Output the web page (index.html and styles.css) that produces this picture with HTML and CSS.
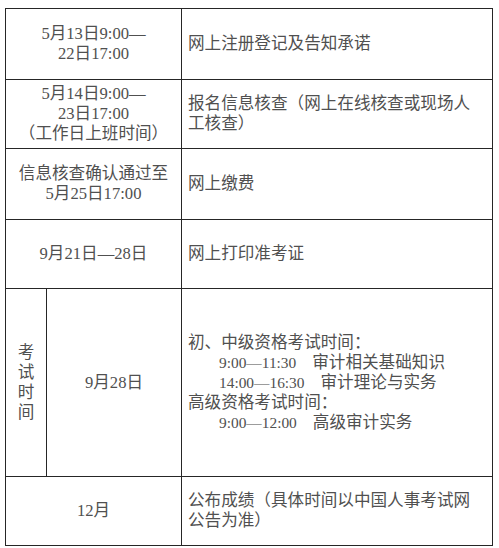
FILE: index.html
```html
<!DOCTYPE html>
<html lang="zh-CN">
<head>
<meta charset="utf-8">
<link rel="stylesheet" href="styles.css">
</head>
<body>
<div class="grid">
  <div class="cell span2 center">5月13日9:00—<br>22日17:00</div>
  <div class="cell left">网上注册登记及告知承诺</div>

  <div class="cell span2 center">5月14日9:00—<br>23日17:00<br>（工作日上班时间）</div>
  <div class="cell left">报名信息核查（网上在线核查或现场人<br>工核查）</div>

  <div class="cell span2 center">信息核查确认通过至<br>5月25日17:00</div>
  <div class="cell left">网上缴费</div>

  <div class="cell span2 center">9月21日—28日</div>
  <div class="cell left">网上打印准考证</div>

  <div class="cell center vert">考<br>试<br>时<br>间</div>
  <div class="cell center">9月28日</div>
  <div class="cell left">
    <div class="block">
      <div>初、中级资格考试时间：</div>
      <div class="ind"><span class="t">9:00—11:30</span>审计相关基础知识</div>
      <div class="ind"><span class="t">14:00—16:30</span>审计理论与实务</div>
      <div>高级资格考试时间：</div>
      <div class="ind"><span class="t">9:00—12:00</span>高级审计实务</div>
    </div>
  </div>

  <div class="cell span2 center">12月</div>
  <div class="cell left">公布成绩（具体时间以中国人事考试网<br>公告为准）</div>
</div>
</body>
</html>
```
FILE: styles.css
```css
html, body {
  margin: 0;
  padding: 0;
  background: #fff;
}
body {
  font-family: "Liberation Serif", "Noto Sans CJK SC", serif;
  font-size: 16.6px;
  line-height: 20px;
  color: #505050;
}
.grid {
  margin: 8px 0 0 5px;
  width: 488px;
  box-sizing: border-box;
  display: grid;
  grid-template-columns: 40px 134px 310px;
  grid-template-rows: 70px 68px 70px 68px 187px 68px;
  gap: 1px;
  padding: 1px;
  background: #262626;
}
.cell {
  background: #fff;
  display: flex;
  align-items: center;
}
.span2 {
  grid-column: span 2;
}
.center {
  justify-content: center;
  text-align: center;
}
.left {
  padding-left: 6px;
}
.ind {
  padding-left: 31px;
}
.t {
  display: inline-block;
  font-size: 15.4px;
  margin-right: 16px;
}
```
